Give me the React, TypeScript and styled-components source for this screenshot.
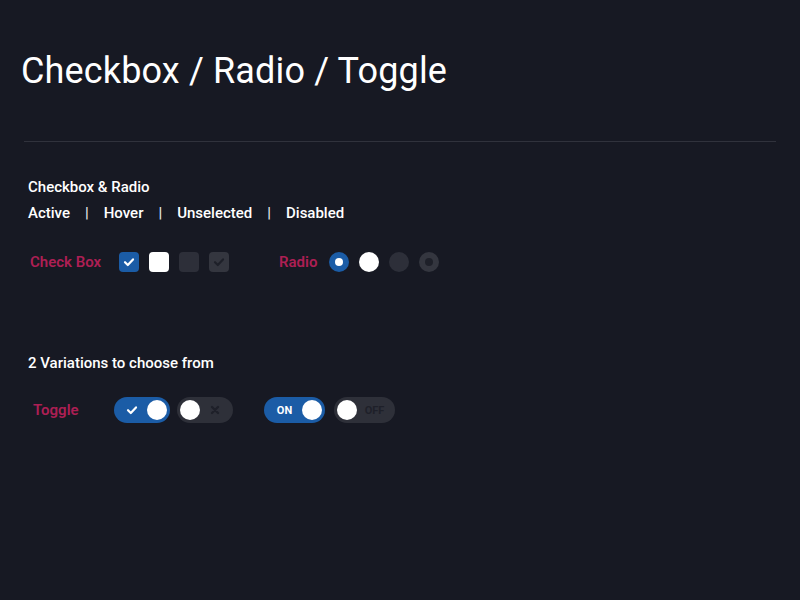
import React from "react";
import styled, { createGlobalStyle } from "styled-components";

const Global = createGlobalStyle`
  html, body { margin: 0; padding: 0; background: #171923; }
  body { font-family: Roboto, "Noto Sans", sans-serif; color: #ffffff; }
`;

const Page = styled.div`
  width: 800px;
  height: 600px;
  background: #171923;
  box-sizing: border-box;
  padding: 49px 24px 0 24px;
`;

const Title = styled.h1`
  margin: 0 0 0 -3px;
  font-size: 36px;
  font-weight: 400;
  line-height: 44px;
  letter-spacing: 0.15px;
  color: #ffffff;
`;

const Divider = styled.hr`
  margin: 48px 0 0 0;
  border: none;
  height: 1px;
  background: #30323c;
`;

const Section = styled.section<{ $top: number }>`
  margin-top: ${(p) => p.$top}px;
  padding-left: 4px;
`;

const Heading = styled.div`
  font-size: 15px;
  font-weight: 500;
  line-height: 18px;
`;

const States = styled.div`
  margin-top: 8px;
  display: flex;
  gap: 15px;
  font-size: 15px;
  font-weight: 500;
  line-height: 18px;
`;

const Sep = styled.span`
  color: #e6e7ea;
`;

const Row = styled.div<{ $top: number }>`
  display: flex;
  align-items: center;
  margin-top: ${(p) => p.$top}px;
`;

const Label = styled.span<{ $w: number; $pl?: number }>`
  width: ${(p) => p.$w}px;
  padding-left: ${(p) => p.$pl ?? 0}px;
  box-sizing: border-box;
  color: #ad1f54;
  font-size: 15px;
  font-weight: 600;
`;

const Group = styled.div<{ $gap: number; $mr?: number }>`
  display: flex;
  align-items: center;
  gap: ${(p) => p.$gap}px;
  margin-right: ${(p) => p.$mr ?? 0}px;
`;

type Kind = "active" | "hover" | "off" | "disabled";

const fill = (k: Kind) =>
  k === "active" ? "#1b5ca6" : k === "hover" ? "#ffffff" : k === "off" ? "#2d2f39" : "#34363f";

const Box = styled.div<{ $k: Kind }>`
  width: 20px;
  height: 20px;
  border-radius: 4px;
  display: flex;
  align-items: center;
  justify-content: center;
  background: ${(p) => fill(p.$k)};
`;

const Radio = styled(Box)`
  border-radius: 50%;
`;

const Dot = styled.div<{ $c: string }>`
  width: 8px;
  height: 8px;
  border-radius: 50%;
  background: ${(p) => p.$c};
`;

const Track = styled.div<{ $on: boolean; $w: number }>`
  width: ${(p) => p.$w}px;
  height: 26px;
  border-radius: 13px;
  box-sizing: border-box;
  padding: 0 3px;
  display: flex;
  align-items: center;
  flex-direction: ${(p) => (p.$on ? "row" : "row-reverse")};
  justify-content: space-between;
  background: ${(p) => (p.$on ? "#1b5ca6" : "#2e3039")};
`;

const Knob = styled.div`
  width: 20px;
  height: 20px;
  border-radius: 50%;
  background: #ffffff;
`;

const Mark = styled.span<{ $on: boolean }>`
  flex: 1;
  display: flex;
  justify-content: center;
  font-size: 11px;
  font-weight: 700;
  color: ${(p) => (p.$on ? "#ffffff" : "#1e2029")};
`;

const Check = ({ color }: { color: string }) => (
  <svg width="12" height="12" viewBox="0 0 12 12">
    <path d="M2 6.2 L4.8 9 L10 3.4" fill="none" stroke={color} strokeWidth="2.2" strokeLinecap="round" strokeLinejoin="round" />
  </svg>
);

const Cross = () => (
  <svg width="10" height="10" viewBox="0 0 10 10">
    <path d="M2 2 L8 8 M8 2 L2 8" stroke="#1e2029" strokeWidth="2.4" strokeLinecap="round" />
  </svg>
);

export default function App() {
  return (
    <Page>
      <Global />
      <Title>Checkbox / Radio / Toggle</Title>
      <Divider />
      <Section $top={36}>
        <Heading>Checkbox &amp; Radio</Heading>
        <States>
          <span>Active</span>
          <Sep>|</Sep>
          <span>Hover</span>
          <Sep>|</Sep>
          <span>Unselected</span>
          <Sep>|</Sep>
          <span>Disabled</span>
        </States>
        <Row $top={30}>
          <Label $w={91} $pl={2}>Check Box</Label>
          <Group $gap={10} $mr={50}>
            <Box $k="active"><Check color="#ffffff" /></Box>
            <Box $k="hover" />
            <Box $k="off" />
            <Box $k="disabled"><Check color="#1e2029" /></Box>
          </Group>
          <Label $w={50}>Radio</Label>
          <Group $gap={10}>
            <Radio $k="active"><Dot $c="#ffffff" /></Radio>
            <Radio $k="hover" />
            <Radio $k="off" />
            <Radio $k="disabled"><Dot $c="#1e2029" /></Radio>
          </Group>
        </Row>
      </Section>
      <Section $top={82}>
        <Heading>2 Variations to choose from</Heading>
        <Row $top={25}>
          <Label $w={86} $pl={5}>Toggle</Label>
          <Group $gap={7} $mr={31}>
            <Track $on $w={56}><Mark $on><Check color="#ffffff" /></Mark><Knob /></Track>
            <Track $on={false} $w={56}><Mark $on={false}><Cross /></Mark><Knob /></Track>
          </Group>
          <Group $gap={9}>
            <Track $on $w={61}><Mark $on>ON</Mark><Knob /></Track>
            <Track $on={false} $w={61}><Mark $on={false}>OFF</Mark><Knob /></Track>
          </Group>
        </Row>
      </Section>
    </Page>
  );
}
